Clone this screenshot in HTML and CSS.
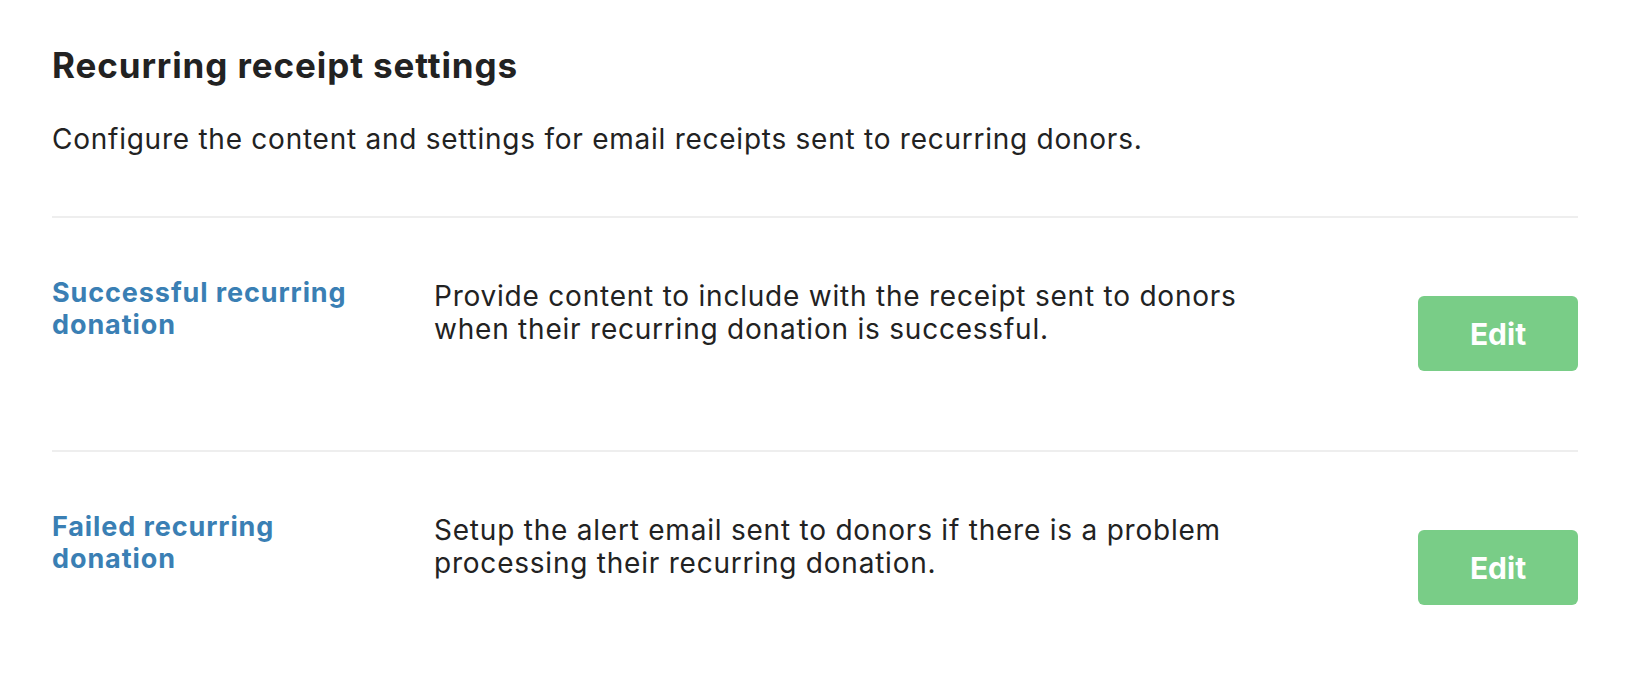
FILE: index.html
```html
<!DOCTYPE html>
<html lang="en">
  <head>
    <meta charset="UTF-8" />
    <meta name="viewport" content="width=device-width, initial-scale=1.0" />
    <title>Recurring receipt settings</title>

    <link rel="stylesheet" href="styles.css">
  </head>

  <body>
    <div class="settings">
      <!-- header -->
      <h1 class="settings-title">Recurring receipt settings</h1>
      <p class="settings-intro">
        Configure the content and settings for email receipts sent to recurring donors.
      </p>

      <!-- one row per receipt type -->
      <div class="receipt-row">
        <div class="receipt-name">Successful recurring donation</div>
        <div class="receipt-desc">
          Provide content to include with the receipt sent to donors when their recurring donation is successful.
        </div>
        <button class="edit-btn">Edit</button>
      </div>

      <div class="receipt-row">
        <div class="receipt-name">Failed recurring donation</div>
        <div class="receipt-desc">
          Setup the alert email sent to donors if there is a problem processing their recurring donation.
        </div>
        <button class="edit-btn">Edit</button>
      </div>
    </div>
  </body>
</html>
```

FILE: styles.css
```css
* {
  margin: 0;
  padding: 0;
  box-sizing: border-box;
}
body {
  background: #ffffff;
  color: #222222;
  font-family: Inter, "Noto Sans", "Liberation Sans", sans-serif;
}
.settings {
  padding: 43px 52px 0;
}

.settings-title {
  font-size: 35px;
  line-height: 44px;
  font-weight: 700;
  letter-spacing: 0.9px;
  color: #222222;
}

.settings-intro {
  margin-top: 35px;
  margin-bottom: 60px;
  font-size: 28px;
  line-height: 34px;
  letter-spacing: 0.75px;
}

.receipt-row {
  /* 每一列: 名稱 / 說明 / 按鈕 */
  display: flex;
  align-items: flex-start;
  height: 234px;
  padding-top: 59px;
  border-top: 2px solid #eeeeee;
}

.receipt-name {
  flex: 0 0 382px;
  padding-right: 60px;
  font-size: 27px;
  line-height: 32px;
  font-weight: 700;
  letter-spacing: 0.9px;
  color: #3a7fb4;
}

.receipt-desc {
  flex: 0 0 830px;
  padding-top: 3px;
  font-size: 28px;
  line-height: 33px;
  letter-spacing: 0.78px;
}

.edit-btn {
  margin-top: 19px;
  margin-left: auto;
  width: 160px;
  height: 75px;
  border: none;
  border-radius: 6px;
  background-color: #79cd87;
  color: #ffffff;
  font-family: inherit;
  font-size: 30px;
  font-weight: 700;
  cursor: pointer;
}
```
